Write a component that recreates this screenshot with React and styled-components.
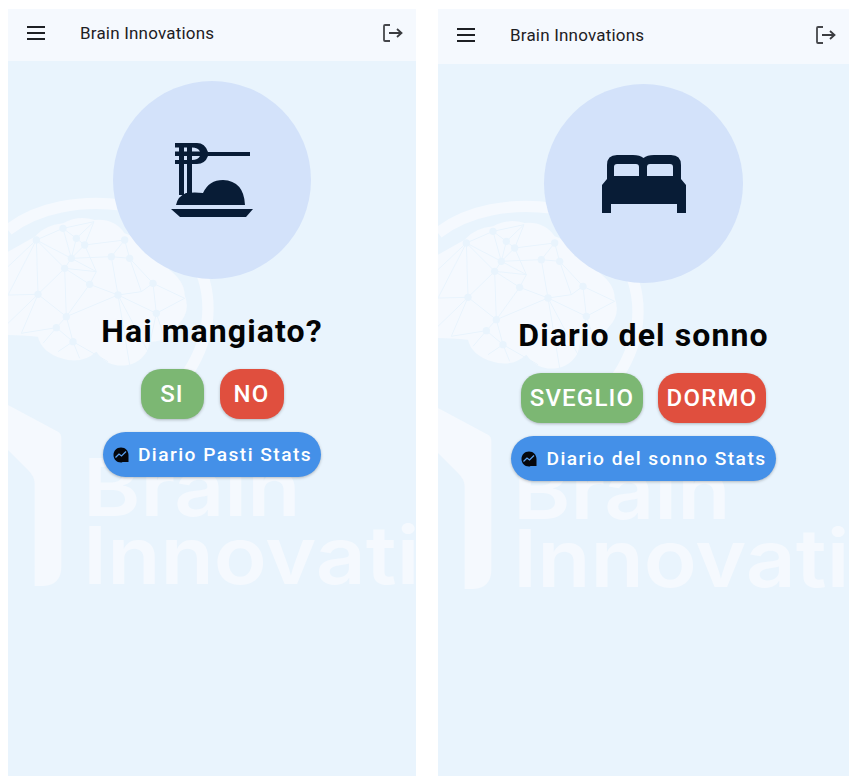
import React from "react";
import styled, { createGlobalStyle } from "styled-components";

const GlobalStyle = createGlobalStyle`
  html, body {
    margin: 0;
    padding: 0;
    background: #ffffff;
    font-family: "Roboto", "Liberation Sans", sans-serif;
  }
`;

const nodes = {
  a: [85, 135], b: [165, 100], c: [205, 130], d: [230, 150], e: [190, 190],
  f: [310, 185], g: [365, 190], h: [350, 135], i: [170, 220], j: [245, 268],
  k: [330, 300], l: [90, 298], m: [175, 365], n: [145, 398], o: [195, 440],
  p: [445, 355], q: [435, 265], r: [530, 310], s: [258, 80], t: [0, 300],
  u: [0, 385], v: [40, 415], w: [265, 230], y: [400, 290], z: [365, 510],
  A: [420, 470], B: [300, 500], C: [215, 490], D: [150, 470], E: [470, 430],
  F: [0, 215], G: [105, 445],
};

const edges =
  "ab ae ai al at bc be cd ce de ds dh dw ei ef ew fg fh gh fk il im iw ij jw jk jm lt lm lu lv mn mk mo no nv ky kp gy gq qy qr pr qp kz kA pA pE oC oD oB sb sc Fa nG";

const hubs = ["a", "b", "c", "d", "e", "f", "g", "h", "i", "j", "k", "l", "m", "n", "o", "p", "q"];

function BrainMark() {
  return (
    <MarkSvg viewBox="0 0 240 570" aria-hidden="true">
      <g transform="translate(0 134) scale(0.3333)">
        <path
          d="M0 105 C90 35 220 15 340 30 C500 70 600 200 600 340 C600 470 530 560 440 650"
          fill="none"
          stroke="#f5f9fe"
          strokeWidth="34"
        />
        <path
          d="M0 170 L80 125 Q110 90 165 85 Q210 60 260 75 Q320 70 350 115 Q400 130 410 175 Q470 190 485 225 Q530 260 530 300 Q550 350 510 390 Q480 440 430 440 Q410 500 360 510 Q300 520 265 470 Q220 510 160 490 Q100 470 90 425 Q40 420 0 420 Z"
          fill="#f5f9fe"
        />
        {edges.split(" ").map((pair) => {
          const [x1, y1] = nodes[pair[0]];
          const [x2, y2] = nodes[pair[1]];
          return <line key={pair} x1={x1} y1={y1} x2={x2} y2={y2} stroke="#e9f4fd" strokeWidth="3" />;
        })}
        {hubs.map((id) => (
          <circle key={id} cx={nodes[id][0]} cy={nodes[id][1]} r="11" fill="#e9f4fd" />
        ))}
      </g>
      <g transform="translate(0 289) scale(0.3333)">
        <path
          d="M0 165 L150 245 Q160 250 160 265 L160 650 Q160 705 105 708 L80 708 L80 400 Q80 380 60 360 L0 300 Z"
          fill="#f5f9fe"
        />
      </g>
    </MarkSvg>
  );
}

function MenuIcon() {
  return (
    <svg width="18" height="14" viewBox="0 0 18 14" aria-hidden="true">
      <path d="M0 1h18M0 7h18M0 13h18" stroke="#1d2024" strokeWidth="2" />
    </svg>
  );
}

function LogoutIcon() {
  return (
    <svg width="20" height="18" viewBox="0 0 20 18" aria-hidden="true">
      <path d="M7 1H2Q1 1 1 2V16Q1 17 2 17H7" fill="none" stroke="#45474b" strokeWidth="1.8" />
      <path d="M6 9H18M14 5L18.500 9L14 13" fill="none" stroke="#3a3c40" strokeWidth="1.8" />
    </svg>
  );
}

function NoodlesIcon() {
  return (
    <svg width="82" height="74" viewBox="0 0 82 74" aria-hidden="true">
      <path
        fill="#081c36"
        fillRule="evenodd"
        d="M4 0H26Q34 0 37 9H79V13H37Q34 21 26 21H21V52H16V21H13V52H8V21H4V17H8V13H4V8.500H8V4.500H4ZM13 4.500V8.500H16V4.500ZM21 4.500V8.500H29Q27 4.500 21 4.500ZM13 13V17H16V13ZM21 13V17Q27 17 29 13Z"
      />
      <path fill="#081c36" d="M5 62Q7 53 15 50Q24 49 32 50Q38 37 52 37Q73 38 74 62Z" />
      <path fill="#081c36" d="M0 66H82L75 74H9Z" />
    </svg>
  );
}

function BedIcon() {
  return (
    <svg width="84" height="58" viewBox="0 0 84 58" aria-hidden="true">
      <path
        fill="#081c36"
        fillRule="evenodd"
        d="M5 24V10Q5 0 15 0H31Q38 0 41.500 3Q45 0 52 0H69Q79 0 79 10V24L84 30V58H75V49H9V58H0V30ZM12 21H37V12Q37 9 34 9H15Q12 9 12 12ZM45 21H71V12Q71 9 68 9H48Q45 9 45 12Z"
      />
    </svg>
  );
}

function StatsIcon() {
  return (
    <svg width="16" height="16" viewBox="0 0 16 16" aria-hidden="true">
      <path fill="#05070c" d="M8 0.500C12.500 0.500 15.500 4 15.500 8V15H9.500Q8.800 15.500 8 15.500C3.500 15.500 0.500 12 0.500 8C0.500 4 3.500 0.500 8 0.500Z" />
      <path d="M2.500 10.500L6 7L8.500 9L13 4.500" fill="none" stroke="#5a9fee" strokeWidth="1.300" />
    </svg>
  );
}

function Phone({ width, barHeight, barLift, circleSize, icon, title, buttons, buttonGap, statsLabel }) {
  return (
    <PhoneFrame $width={width}>
      <TopBar $height={barHeight} $lift={barLift}>
        <MenuButton type="button">
          <MenuIcon />
        </MenuButton>
        <BarTitle>Brain Innovations</BarTitle>
        <LogoutButton type="button">
          <LogoutIcon />
        </LogoutButton>
      </TopBar>
      <Body>
        <BrainMark />
        <WordMark>
          <span>Brain</span>
          <span>Innovations</span>
        </WordMark>
        <Content>
          <IconCircle $size={circleSize}>{icon}</IconCircle>
          <Title>{title}</Title>
          <ButtonRow $gap={buttonGap}>
            <ChoiceButton type="button" $color="#7cb773" $width={buttons[0].width}>
              {buttons[0].label}
            </ChoiceButton>
            <ChoiceButton type="button" $color="#e04f3e" $width={buttons[1].width}>
              {buttons[1].label}
            </ChoiceButton>
          </ButtonRow>
          <StatsButton type="button">
            <StatsIcon />
            {statsLabel}
          </StatsButton>
        </Content>
      </Body>
    </PhoneFrame>
  );
}

export default function App() {
  return (
    <>
      <GlobalStyle />
      <Page>
        <Phone
          width={408}
          barHeight={52}
          barLift={4}
          circleSize={198}
          icon={<NoodlesIcon />}
          title="Hai mangiato?"
          buttons={[
            { label: "SI", width: 63 },
            { label: "NO", width: 64 },
          ]}
          buttonGap={16}
          statsLabel="Diario Pasti Stats"
        />
        <Phone
          width={411}
          barHeight={55}
          barLift={3}
          circleSize={199}
          icon={<BedIcon />}
          title="Diario del sonno"
          buttons={[
            { label: "SVEGLIO", width: 122 },
            { label: "DORMO", width: 108 },
          ]}
          buttonGap={15}
          statsLabel="Diario del sonno Stats"
        />
      </Page>
    </>
  );
}

const Page = styled.div`
  display: flex;
  gap: 22px;
  padding: 9px 8px 8px;
  width: 858px;
  height: 784px;
  box-sizing: border-box;
`;

const PhoneFrame = styled.section`
  display: flex;
  flex-direction: column;
  width: ${(props) => props.$width}px;
  background: #e9f4fd;
`;

const TopBar = styled.header`
  display: flex;
  align-items: center;
  flex: none;
  box-sizing: border-box;
  height: ${(props) => props.$height}px;
  padding: 0 13px ${(props) => props.$lift}px 19px;
  background: #f5f9fe;
`;

const MenuButton = styled.button`
  display: flex;
  padding: 0;
  margin-right: 35px;
  border: none;
  background: none;
`;

const BarTitle = styled.h1`
  flex: 1;
  margin: 0;
  font-size: 17px;
  font-weight: 400;
  letter-spacing: 0.2px;
  color: #1d2024;
`;

const LogoutButton = styled.button`
  display: flex;
  padding: 0;
  border: none;
  background: none;
`;

const Body = styled.main`
  position: relative;
  flex: 1;
  overflow: hidden;
`;

const MarkSvg = styled.svg`
  position: absolute;
  top: 0;
  left: 0;
  width: 240px;
  height: 570px;
`;

const WordMark = styled.div`
  position: absolute;
  top: 392px;
  left: 75px;
  display: flex;
  flex-direction: column;
  font-family: "Inter", sans-serif;
  font-size: 80px;
  font-weight: 600;
  line-height: 68px;
  white-space: nowrap;
  color: #f5f9fe;
  transform: scaleX(1.09);
  transform-origin: left top;
`;

const Content = styled.div`
  position: relative;
  display: flex;
  flex-direction: column;
  align-items: center;
  padding-top: 20px;
`;

const IconCircle = styled.div`
  display: flex;
  align-items: center;
  justify-content: center;
  width: ${(props) => props.$size}px;
  height: ${(props) => props.$size}px;
  border-radius: 50%;
  background: #d3e2fa;
`;

const Title = styled.h2`
  margin: 32px 0 0;
  font-size: 32px;
  line-height: 40px;
  font-weight: 700;
  letter-spacing: 1.1px;
  color: #030405;
`;

const ButtonRow = styled.div`
  display: flex;
  gap: ${(props) => props.$gap}px;
  margin-top: 18px;
`;

const ChoiceButton = styled.button`
  width: ${(props) => props.$width}px;
  height: 50px;
  padding: 0;
  border: none;
  border-radius: 20px;
  background: ${(props) => props.$color};
  box-shadow: 0 1px 3px rgba(0, 0, 0, 0.25);
  font-family: inherit;
  font-size: 24px;
  font-weight: 500;
  letter-spacing: 1.2px;
  color: #ffffff;
`;

const StatsButton = styled.button`
  display: flex;
  align-items: center;
  gap: 9px;
  height: 45px;
  margin-top: 13px;
  padding: 0 9px 0 10px;
  border: none;
  border-radius: 23px;
  background: #4490e8;
  box-shadow: 0 1px 3px rgba(0, 0, 0, 0.25);
  font-family: inherit;
  font-size: 19.2px;
  font-weight: 500;
  letter-spacing: 1.45px;
  color: #ffffff;
`;
